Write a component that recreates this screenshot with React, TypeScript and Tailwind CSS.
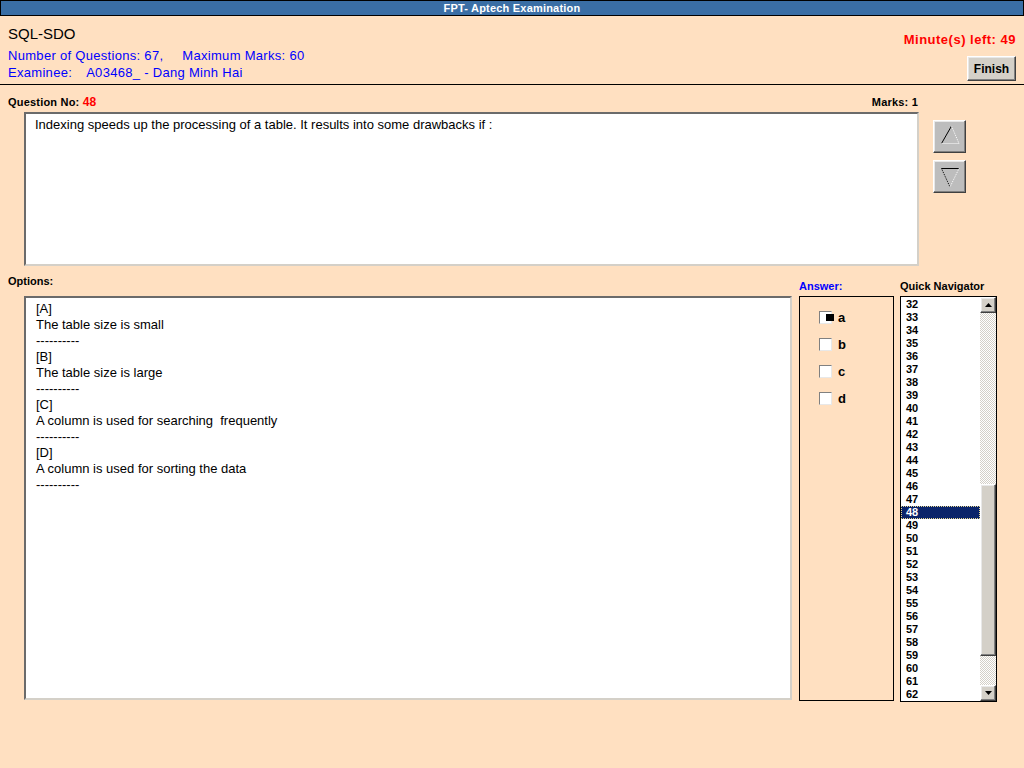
import React from "react";

const raised =
  "border border-t-white border-l-white border-r-[#404040] border-b-[#404040] shadow-[inset_-1px_-1px_0_#808080,inset_1px_1px_0_#e8e8e8]";

function ArrowBtn({ dir }: { dir: "up" | "down" }) {
  return (
    <div className={`w-[33px] h-[33px] bg-[#bdbdbd] ${raised}`}>
      <svg width="31" height="31" viewBox="0 0 31 31" className="block">
        {dir === "up" ? (
          <>
            <line x1="17.5" y1="5" x2="7.5" y2="22.5" stroke="#000" strokeWidth="1" />
            <line x1="17.5" y1="5" x2="25" y2="22.5" stroke="#fff" strokeWidth="1" strokeDasharray="1 1" />
            <line x1="7.5" y1="22.5" x2="25" y2="22.5" stroke="#fff" strokeWidth="1" strokeDasharray="1 1" />
          </>
        ) : (
          <>
            <line x1="7.5" y1="7.5" x2="25" y2="7.5" stroke="#000" strokeWidth="1" />
            <line x1="7.5" y1="7.5" x2="16" y2="26" stroke="#000" strokeWidth="1" strokeDasharray="1 1" />
            <line x1="25" y1="7.5" x2="16" y2="26" stroke="#fff" strokeWidth="1" strokeDasharray="1 1" />
          </>
        )}
      </svg>
    </div>
  );
}

function CheckBox({ checked }: { checked?: boolean }) {
  return (
    <div className="relative w-[13px] h-[13px] bg-white border border-t-[#808080] border-l-[#808080] border-r-[#e8e8e8] border-b-[#e8e8e8]">
      {checked && <div className="absolute left-[6px] top-[2px] w-[8px] h-[7px] bg-black" />}
    </div>
  );
}

function ScrollBtn({ dir }: { dir: "up" | "down" }) {
  return (
    <div className={`w-[16px] h-[16px] bg-[#d4d0c8] ${raised} flex items-center justify-center`}>
      <svg width="7" height="4" viewBox="0 0 7 4" className="block">
        {dir === "up" ? <polygon points="3.5,0 7,4 0,4" fill="#000" /> : <polygon points="0,0 7,0 3.5,4" fill="#000" />}
      </svg>
    </div>
  );
}

export default function App() {
  const nums = Array.from({ length: 31 }, (_, i) => 32 + i);
  const options = [
    ["[A]", "The table size is small"],
    ["[B]", "The table size is large"],
    ["[C]", "A column is used for searching\u00a0 frequently"],
    ["[D]", "A column is used for sorting the data"],
  ];
  return (
    <div className="w-[1024px] h-[768px] overflow-hidden bg-[#ffe0c1] font-['Liberation_Sans',Arial,sans-serif] text-black">
      {/* Title bar */}
      <div className="h-[16px] bg-[#3a6ea5] border border-black flex items-center justify-center text-white font-bold text-[11px] leading-[13px] tracking-[0.2px]">
        FPT- Aptech Examination
      </div>

      {/* Header */}
      <div className="h-[69px] border-b border-black flex justify-between px-[8px]">
        <div className="pt-[9px]">
          <div className="text-[15px] leading-[18px]">SQL-SDO</div>
          <div className="mt-[4px] text-[13px] leading-[17px] text-[#0000ff] tracking-[0.3px]">
            <div>
              Number of Questions: 67,<span className="inline-block w-[19px]" />Maximum Marks: 60
            </div>
            <div>
              Examinee:<span className="inline-block w-[14px]" />A03468_ - Dang Minh Hai
            </div>
          </div>
        </div>
        <div className="pt-[15px] flex flex-col items-end">
          <div className="text-[13px] leading-[17px] text-[#ff0000] font-bold tracking-[0.5px]">Minute(s) left: 49</div>
          <div className={`mt-[8px] w-[49px] h-[25px] bg-[#d4d0c8] ${raised} flex items-center justify-center font-bold text-[12px]`}>
            Finish
          </div>
        </div>
      </div>

      {/* Main */}
      <div className="pl-[8px]">
        <div className="w-[910px] pt-[11px] flex justify-between text-[11px] leading-[13px] font-bold tracking-[0.2px]">
          <div>
            Question No: <span className="text-[#ff0000] text-[12px]">48</span>
          </div>
          <div>Marks: 1</div>
        </div>

        <div className="mt-[3px] flex">
          <div className="ml-[16px] w-[895px] h-[154px] bg-white border-2 border-t-[#6b6b6b] border-l-[#6b6b6b] border-r-[#d4d0c8] border-b-[#d4d0c8] pl-[9px] pt-[3px] text-[13px] leading-[16px]">
            Indexing speeds up the processing of a table. It results into some drawbacks if :
          </div>
          <div className="ml-[14px] pt-[8px] flex flex-col gap-[7px]">
            <ArrowBtn dir="up" />
            <ArrowBtn dir="down" />
          </div>
        </div>

        <div className="flex">
          {/* Options */}
          <div>
            <div className="h-[30px] pt-[9px] text-[11px] leading-[13px] font-bold">Options:</div>
            <div className="ml-[16px] w-[768px] h-[404px] bg-white border-2 border-t-[#6b6b6b] border-l-[#6b6b6b] border-r-[#d4d0c8] border-b-[#d4d0c8] pl-[10px] pt-[3px] text-[13px] leading-[16px]">
              {options.map(([k, t]) => (
                <React.Fragment key={k}>
                  <div>{k}</div>
                  <div>{t}</div>
                  <div>----------</div>
                </React.Fragment>
              ))}
            </div>
          </div>

          {/* Answer */}
          <div className="ml-[7px]">
            <div className="h-[30px] pt-[14px] text-[11px] leading-[13px] font-bold text-[#0000ff]">Answer:</div>
            <div className="w-[95px] h-[405px] border border-black pl-[19px] pt-[14px] flex flex-col gap-[14px]">
              {["a", "b", "c", "d"].map((l, i) => (
                <div key={l} className="flex items-center h-[13px]">
                  <CheckBox checked={i === 0} />
                  <span className="ml-[6px] text-[13px] leading-[13px] font-bold">{l}</span>
                </div>
              ))}
            </div>
          </div>

          {/* Quick Navigator */}
          <div className="ml-[6px]">
            <div className="h-[30px] pt-[14px] text-[11px] leading-[13px] font-bold">Quick Navigator</div>
            <div className="w-[97px] h-[406px] border border-black bg-white flex overflow-hidden">
              <div className="w-[79px] pt-[1px] flex flex-col">
                {nums.map((n) => (
                  <div
                    key={n}
                    className={
                      n === 48
                        ? "h-[13px] shrink-0 pl-[4px] text-[11px] leading-[11px] font-bold bg-[#0a246a] text-white border border-dotted border-[#e8d890]"
                        : "h-[13px] shrink-0 pl-[5px] text-[11px] leading-[13px] font-bold"
                    }
                  >
                    {n}
                  </div>
                ))}
              </div>
              <div className="w-[16px] flex flex-col bg-[repeating-conic-gradient(#d4d0c8_0_25%,#ffffff_0_50%)] bg-[length:2px_2px]">
                <ScrollBtn dir="up" />
                <div className="h-[171px]" />
                <div className={`w-[16px] h-[172px] bg-[#d4d0c8] ${raised}`} />
                <div className="flex-1" />
                <ScrollBtn dir="down" />
              </div>
            </div>
          </div>
        </div>
      </div>
    </div>
  );
}
